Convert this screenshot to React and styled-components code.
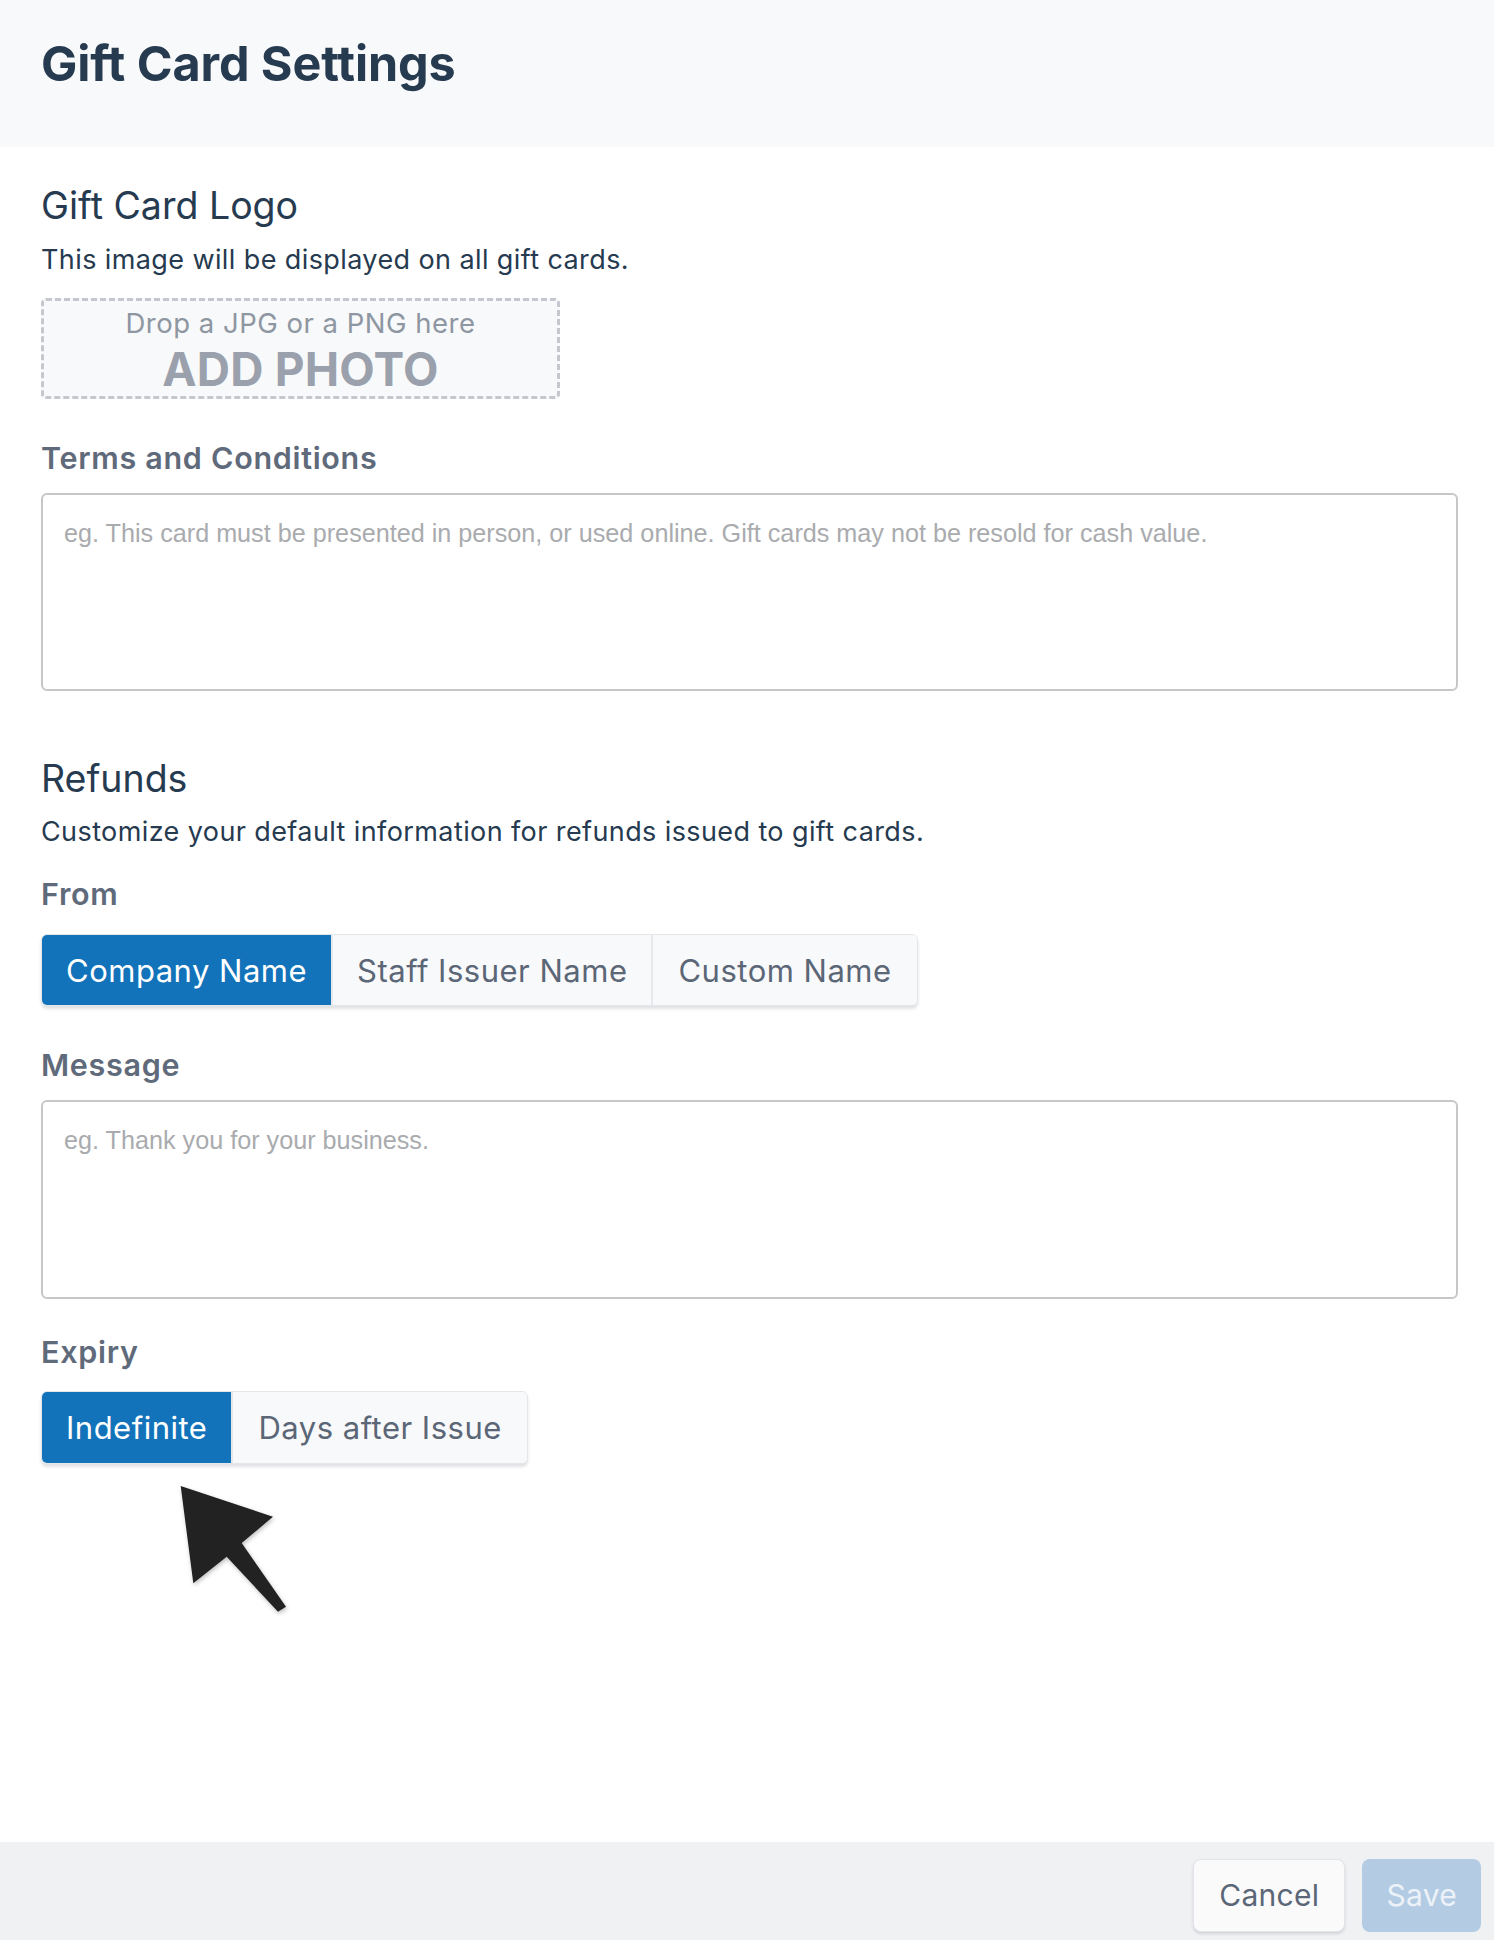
import React from "react";
import styled, { createGlobalStyle } from "styled-components";

const Global = createGlobalStyle`
  html, body { margin: 0; padding: 0; background: #ffffff; }
  body { font-family: Inter, "Noto Sans", sans-serif; -webkit-font-smoothing: antialiased; }
  * { box-sizing: border-box; }
`;

const Page = styled.div`
  position: relative;
  width: 1494px;
  min-height: 1940px;
  display: flex;
  flex-direction: column;
  background: #ffffff;
`;

const Header = styled.header`
  height: 147px;
  background: #f8f9fa;
  padding: 35px 41px 0;
`;

const Title = styled.h1`
  margin: 0;
  font-size: 48.5px;
  line-height: 58px;
  font-weight: 700;
  color: #263a50;
  letter-spacing: -0.1px;
`;

const Content = styled.main`
  flex: 1;
  display: flex;
  flex-direction: column;
  align-items: flex-start;
  padding: 0 36px 0 41px;
`;

const SectionTitle = styled.h2`
  margin: ${(p) => p.$top}px 0 0;
  font-size: 37.5px;
  line-height: 44px;
  font-weight: 400;
  color: #263a50;
`;

const Description = styled.p`
  margin: ${(p) => p.$top}px 0 0;
  font-size: 27px;
  line-height: 32px;
  letter-spacing: 0.4px;
  color: #263a50;
`;

const Label = styled.div`
  margin-top: ${(p) => p.$top}px;
  font-size: 30.5px;
  line-height: 34px;
  font-weight: 600;
  letter-spacing: 0.7px;
  color: #5f6a7a;
`;

const DropZone = styled.div`
  margin-top: 22px;
  width: 519px;
  height: 101px;
  border: 3px dashed #c4c8ce;
  border-radius: 5px;
  background: #f8f9fa;
  display: flex;
  flex-direction: column;
  align-items: center;
  justify-content: flex-start;
  padding-top: 7px;
`;

const DropHint = styled.span`
  font-size: 27.5px;
  line-height: 30px;
  letter-spacing: 0.5px;
  color: #8e96a2;
`;

const DropAction = styled.span`
  margin-top: 5px;
  font-size: 46px;
  line-height: 52px;
  font-weight: 700;
  color: #9aa1ac;
  letter-spacing: 0.2px;
`;

const TextArea = styled.textarea`
  margin-top: 18px;
  width: 100%;
  height: ${(p) => p.$h}px;
  border: 2px solid #c7c7c9;
  border-radius: 6px;
  padding: 23px 21px;
  resize: none;
  font-family: "Liberation Sans", Arial, sans-serif;
  font-size: 25.2px;
  line-height: 30px;
  color: #333;
  background: #fff;
  outline: none;
  &::placeholder { color: #a9abae; }
`;

const Segmented = styled.div`
  margin-top: ${(p) => p.$top}px;
  display: flex;
  height: ${(p) => p.$h}px;
  border-radius: 6px;
  border: 1px solid #e4e6e9;
  box-shadow: 0 3px 3px rgba(40, 50, 70, 0.14);
  overflow: hidden;
  background: #f8f9fa;
`;

const Segment = styled.button`
  border: none;
  border-left: ${(p) => (p.$first ? "none" : "2px solid #e6e8eb")};
  margin: 0;
  padding: 0 ${(p) => p.$pad}px;
  font-family: Inter, "Noto Sans", sans-serif;
  font-size: 31px;
  letter-spacing: 0.5px;
  font-weight: 400;
  background: ${(p) => (p.$active ? "#1273ba" : "#f8f9fa")};
  color: ${(p) => (p.$active ? "#ffffff" : "#5b6677")};
  cursor: pointer;
  white-space: nowrap;
`;

const Footer = styled.footer`
  height: 98px;
  background: #f0f1f3;
  display: flex;
  align-items: center;
  justify-content: flex-end;
  gap: 17px;
  padding: 0 13px 0 0;
`;

const FooterButton = styled.button`
  height: 73px;
  margin-top: 8px;
  padding: 0 ${(p) => p.$pad}px;
  border-radius: 8px;
  font-family: Inter, "Noto Sans", sans-serif;
  font-size: 30px;
  letter-spacing: 0.3px;
  border: ${(p) => (p.$primary ? "none" : "1px solid #e3e5e8")};
  background: ${(p) => (p.$primary ? "#b3cce3" : "#fafafb")};
  color: ${(p) => (p.$primary ? "#edf2f8" : "#5b6677")};
  box-shadow: ${(p) => (p.$primary ? "none" : "0 2px 3px rgba(40,50,70,0.15)")};
`;

const Pointer = styled.svg`
  position: absolute;
  left: 178px;
  top: 1484px;
  width: 112px;
  height: 130px;
  filter: drop-shadow(1px 2px 2px rgba(0, 0, 0, 0.25));
`;

export default function App() {
  return (
    <Page>
      <Global />
      <Header>
        <Title>Gift Card Settings</Title>
      </Header>
      <Content>
        <SectionTitle $top={37}>Gift Card Logo</SectionTitle>
        <Description $top={16}>This image will be displayed on all gift cards.</Description>
        <DropZone>
          <DropHint>Drop a JPG or a PNG here</DropHint>
          <DropAction>ADD PHOTO</DropAction>
        </DropZone>
        <Label $top={42}>Terms and Conditions</Label>
        <TextArea
          $h={198}
          placeholder="eg. This card must be presented in person, or used online. Gift cards may not be resold for cash value."
        />
        <SectionTitle $top={66}>Refunds</SectionTitle>
        <Description $top={15}>
          Customize your default information for refunds issued to gift cards.
        </Description>
        <Label $top={29}>From</Label>
        <Segmented $top={23} $h={72}>
          <Segment $first $active $pad={24}>Company Name</Segment>
          <Segment $pad={24}>Staff Issuer Name</Segment>
          <Segment $pad={25}>Custom Name</Segment>
        </Segmented>
        <Label $top={42}>Message</Label>
        <TextArea $h={199} placeholder="eg. Thank you for your business." />
        <Label $top={36}>Expiry</Label>
        <Segmented $top={22} $h={73}>
          <Segment $first $active $pad={24}>Indefinite</Segment>
          <Segment $pad={25}>Days after Issue</Segment>
        </Segmented>
      </Content>
      <Footer>
        <FooterButton $pad={25}>Cancel</FooterButton>
        <FooterButton $primary $pad={24}>Save</FooterButton>
      </Footer>
      <Pointer viewBox="0 0 112 130">
        <polygon
          points="2.7,2 95,32.7 63.7,59 108,122.7 100,127.7 48.7,72.7 15.3,99.3"
          fill="#222222"
        />
      </Pointer>
    </Page>
  );
}
